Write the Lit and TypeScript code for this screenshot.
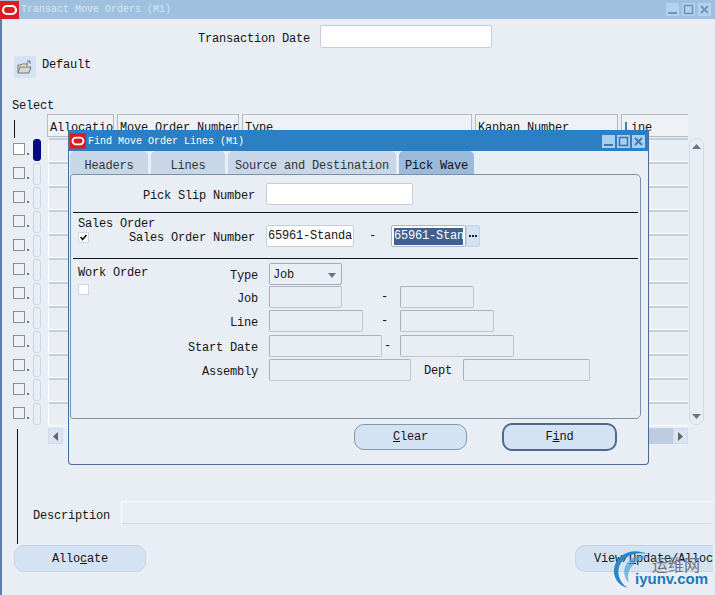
import { LitElement, html, css, svg } from "lit";
import { customElement } from "lit/decorators.js";

const logo = (w: number, h: number) => html`<svg class="logo" width=${w} height=${h} viewBox="0 0 19 18"><rect width="19" height="18" fill="#dc1c24"/><rect x="3" y="5" width="13" height="8" rx="4" fill="none" stroke="#fff" stroke-width="2.2"/></svg>`;

const winBtns = (cls: string) => html`<div class="winbtns ${cls}">
  <svg width="13" height="13" viewBox="0 0 13 13"><rect width="13" height="13" class="wb"/><rect x="2" y="9" width="9" height="2" class="wg"/></svg>
  <svg width="13" height="13" viewBox="0 0 13 13"><rect width="13" height="13" class="wb"/><rect x="2.5" y="2.5" width="8" height="8" fill="none" stroke-width="1.6" class="ws"/></svg>
  <svg width="13" height="13" viewBox="0 0 13 13"><rect width="13" height="13" class="wb"/>${svg`<path d="M3 3l7 7M10 3l-7 7" stroke-width="2" fill="none" class="ws"/>`}</svg>
</div>`;

const headers = [
  { t: "Allocatio", w: 67 },
  { t: "Move Order Number", w: 122 },
  { t: "Type", w: 230 },
  { t: "Kanban Number", w: 143 },
  { t: "Line", w: 67 },
];
const rows = Array.from({ length: 12 }, (_, i) => i);
const workRows = [
  { label: "Job", w1: 73, dash: 39, w2: 74 },
  { label: "Line", w1: 94, dash: 18, w2: 94 },
  { label: "Start Date", w1: 113, dash: 2, w2: 114 },
];

@customElement("app-root")
export class AppRoot extends LitElement {
  static styles = css`
    :host { display: block; position: relative; width: 715px; height: 595px; overflow: hidden;
      font-family: "Liberation Mono", monospace; font-size: 12px; letter-spacing: -0.2px; color: #151515; background: #e9eef4; }
    * { box-sizing: border-box; }
    u { text-decoration: underline; }
    .logo { display: block; flex: none; }
    .main { height: 595px; border-left: 2px solid #5f7ea8; display: flex; flex-direction: column; }
    .title { height: 19px; background: #9fc0de; display: flex; align-items: center; color: #d9e6f1; font-size: 10px; letter-spacing: 0; margin-left: -2px; }
    .title span { margin-left: 2px; }
    .winbtns { margin-left: auto; display: flex; gap: 3px; }
    .winbtns.m { margin-right: 4px; }
    .m .wb { fill: #b4d2ec; } .m .wg { fill: #6b96c2; } .m .ws { stroke: #6b96c2; }
    .d .wb { fill: #a9cfee; } .d .wg { fill: #3f78b3; } .d .ws { stroke: #3f78b3; }
    .winbtns.d { margin-right: 3px; gap: 2px; }
    .date { display: flex; align-items: center; margin: 6px 0 0 196px; height: 23px; }
    .date .lbl { width: 122px; padding-top: 4px; }
    .input { height: 22px; background: #fff; border: 1px solid #c3cfdd; border-radius: 2px; flex: none; }
    .date .input { width: 172px; height: 23px; }
    .dflt { display: flex; margin: 8px 0 0 12px; height: 22px; gap: 6px; }
    .iconbtn { width: 22px; height: 22px; background: #d3e3f3; border-radius: 2px; display: flex; align-items: center; justify-content: center; }
    .dflt .lbl { margin-top: 2px; }
    .sel { margin: 21px 0 0 10px; height: 15px; line-height: 15px; }
    .hdr { display: flex; height: 24px; margin-left: 45px; gap: 3px; position: relative; }
    .hdr .tick { position: absolute; left: -33px; top: 6px; width: 1px; height: 18px; background: #111; }
    .hc { flex: none; border: 1px solid #b5bcc5; height: 23px; padding: 6px 0 0 2px; background: #eef2f6; overflow: hidden; white-space: nowrap; }
    .hc:last-of-type { border-right: none; }
    .body { display: flex; }
    .rows { width: 687px; }
    .row { display: flex; height: 24px; align-items: flex-start; padding-left: 11px; }
    .cb { width: 12px; height: 12px; border: 1px solid #8b8f96; background: #eef2f7; margin-top: 5px; flex: none; }
    .row:first-child .cb { background: #fff; }
    .dot { width: 2px; height: 2px; background: #777; margin: 15px 4px 0 2px; flex: none; }
    .ind { width: 8px; height: 22px; margin-top: 1px; border: 1px solid #c9d6e6; border-radius: 3px; background: #e9eef5; flex: none; }
    .ind.cur { background: #00087f; border-color: #00087f; }
    .cells { margin-left: 7px; width: 640px; height: 24px; border-top: 2px solid #c3cfe0; border-left: 1px solid #fff; border-radius: 3px 0 0 0; border-bottom: 1px solid #fff; background: #e9eef4; }
    .vs { width: 15px; height: 287px; flex: none; border: 1px solid #d0dbe8; border-radius: 7px; display: flex; flex-direction: column; justify-content: space-between; align-items: center; padding: 5px 0; }
    .hs { display: flex; align-items: stretch; margin: 2px 0 0 46px; height: 16px; width: 640px; position: relative; }
    .hs .line { position: absolute; left: -31px; top: 1px; width: 1px; height: 115px; background: #111; }
    .sb { width: 15px; background: #dbe5f1; display: flex; align-items: center; justify-content: center; border: 1px solid #cfdae8; flex: none; }
    .track { flex: 1; }
    .thumb { width: 26px; background: #bccde2; }
    .desc { display: flex; align-items: center; margin: 57px 2px 0 31px; height: 23px; }
    .desc .lbl { width: 88px; padding-top: 6px; }
    .desc .input { flex: 1; background: #eaeff5; border: none; border-top: 1px solid #fff; border-bottom: 1px solid #d2dbe6; border-left: 1px solid #fff; height: 23px; }
    .bottom { display: flex; justify-content: space-between; margin: 21px 2px 0 12px; }
    .btn { height: 27px; background: #d3e3f3; border: 1px solid #c3d3e5; border-radius: 10px; display: flex; align-items: center; justify-content: center; flex: none; }
    .bottom .b1 { width: 132px; }
    .bottom .b1 span, .bottom .b2 span { padding-top: 1px; }
    .bottom .b2 { width: 138px; justify-content: flex-end; border-radius: 10px 0 0 10px; border-right: none; white-space: nowrap; overflow: hidden; }

    .dlg { position: absolute; left: 68px; top: 130px; width: 581px; height: 335px; background: #e9eef4; border: 1px solid #4a6a98; border-radius: 0 0 4px 4px; border-top: none; }
    .dtitle { height: 21px; padding: 1px 0 0 1px; background: #2c7fc2; display: flex; align-items: center; color: #fff; font-size: 10px; letter-spacing: 0; }
    .dtitle span { margin-left: 2px; }
    .tabs { display: flex; gap: 3px; height: 23px; margin-left: 1px; }
    .tab { background: #c8d7e8; color: #333; border-radius: 5px 5px 0 0; display: flex; align-items: center; justify-content: center; flex: none; padding-top: 6px; }
    .tab.on { background: #9bb9d9; color: #111; }
    .panel { width: 571px; height: 245px; margin-left: 1px; border: 1px solid #7a90a8; border-radius: 3px 5px 5px 3px; padding-top: 8px; }
    .prow { display: flex; align-items: center; height: 22px; }
    .prow .lbl { width: 184px; text-align: right; margin-right: 11px; flex: none; padding-top: 3px; }
    hr { margin: 7px 2px 0 2px; height: 1px; border: none; background: #151515; }
    .sales { display: flex; height: 38px; }
    .sleft { width: 184px; margin-right: 11px; padding: 4px 0 0 7px; flex: none; }
    .sline { display: flex; justify-content: space-between; align-items: center; margin-top: -1px; }
    .sline span { padding-top: 1px; }
    .check { width: 11px; height: 11px; background: #fff; border: 1px solid #cdd6e2; flex: none; display: block; }
    .sright { display: flex; align-items: center; margin-top: 12px; height: 22px; }
    .in1 { width: 88px; overflow: hidden; white-space: nowrap; padding: 3px 0 0 1px; }
    .sdash { width: 37px; text-align: center; }
    .in2 { width: 75px; overflow: hidden; white-space: nowrap; border-color: #aab4c2; padding: 2px; }
    .in2 b { display: block; background: #3e6190; color: #fff; font-weight: normal; height: 17px; line-height: 16px; overflow: hidden; }
    .lov { width: 14px; height: 22px; background: #d3e3f3; border: 1px solid #c3d3e5; border-radius: 0 3px 3px 0; display: flex; align-items: center; justify-content: center; gap: 1px; }
    .lov i { width: 2px; height: 2px; background: #222; }
    .work { display: flex; padding-top: 4px; }
    .wleft { width: 70px; padding: 3px 0 0 7px; flex: none; white-space: nowrap; }
    .wleft .check { margin-top: 4px; }
    .wgrid { display: grid; grid-template-rows: 23px 24px 25px 24px 22px; }
    .wrow { display: flex; align-items: flex-start; }
    .wrow .lbl { width: 117px; margin-right: 11px; text-align: right; padding-top: 6px; flex: none; }
    .off { background: #e9eef4; border: 1px solid #bcc6d2; border-top-color: #a9b2bd; border-left-color: #a9b2bd; }
    .select { width: 73px; background: #eaeff5; padding: 2px 5px 0 3px; display: flex; align-items: center; justify-content: space-between; border-color: #a3aebb; }
    .dash { width: 7px; text-align: center; flex: none; padding-top: 4px; }
    .dept { margin: 5px 11px 0 13px; flex: none; }
    .dbtns { display: flex; margin: 4px 0 0 285px; gap: 35px; align-items: center; }
    .clear { width: 113px; height: 26px; border-color: #7f97b1; }
    .find { width: 115px; height: 28px; border: 2px solid #4e6a8c; }

    .wm { position: absolute; left: 610px; top: 545px; width: 105px; height: 50px; pointer-events: none; letter-spacing: 0; }
    .wm svg { position: absolute; left: 1px; top: 3px; }
    .wm .cn { position: absolute; left: 42px; top: 7px; font: 16px "Noto Sans CJK SC", sans-serif; color: #6f7379; }
    .wm .en { position: absolute; left: 25px; top: 25px; font: bold 15px "Liberation Sans", sans-serif; color: #2178b4; white-space: nowrap; }
  `;

  render() {
    return html`
      <div class="main">
        <div class="title">${logo(19, 18)}<span>Transact Move Orders (M1)</span>${winBtns("m")}</div>
        <div class="date"><span class="lbl">Transaction Date</span><div class="input"></div></div>
        <div class="dflt">
          <div class="iconbtn"><svg width="18" height="16" viewBox="0 0 18 16"><path d="M2 14V6h3l1-1h5v2" fill="#e8e4d6" stroke="#777" /><path d="M2 14l2-6h11l-2 6z" fill="#d8d8d0" stroke="#777"/><path d="M10 5l4-3M14 2h-3M14 2v3" stroke="#6a7f99" fill="none"/></svg></div>
          <span class="lbl">Default</span>
        </div>
        <div class="sel">Select</div>
        <div class="hdr"><i class="tick"></i>${headers.map((h) => html`<div class="hc" style="width:${h.w}px">${h.t}</div>`)}</div>
        <div class="body">
          <div class="rows">
            ${rows.map((i) => html`<div class="row"><div class="cb"></div><i class="dot"></i><div class="ind ${i === 0 ? "cur" : ""}"></div><div class="cells"></div></div>`)}
          </div>
          <div class="vs">
            <svg width="9" height="5" viewBox="0 0 9 5"><path d="M4.5 0L9 5H0z" fill="#6e7580"/></svg>
            <svg width="9" height="5" viewBox="0 0 9 5"><path d="M4.5 5L9 0H0z" fill="#6e7580"/></svg>
          </div>
        </div>
        <div class="hs">
          <i class="line"></i>
          <div class="sb"><svg width="5" height="9" viewBox="0 0 5 9"><path d="M0 4.5L5 0v9z" fill="#666"/></svg></div>
          <div class="track"></div><div class="thumb"></div>
          <div class="sb"><svg width="5" height="9" viewBox="0 0 5 9"><path d="M5 4.5L0 0v9z" fill="#666"/></svg></div>
        </div>
        <div class="desc"><span class="lbl">Description</span><div class="input"></div></div>
        <div class="bottom">
          <div class="btn b1"><span>Allo<u>c</u>ate</span></div>
          <div class="btn b2"><span>View/<u>U</u>pdate/Alloc</span></div>
        </div>
      </div>

      <div class="dlg">
        <div class="dtitle">${logo(16, 16)}<span>Find Move Order Lines (M1)</span>${winBtns("d")}</div>
        <div class="tabs">
          <div class="tab" style="width:78px">Headers</div>
          <div class="tab" style="width:74px">Lines</div>
          <div class="tab" style="width:168px">Source and Destination</div>
          <div class="tab on" style="width:75px">Pick Wave</div>
        </div>
        <div class="panel">
          <div class="prow"><span class="lbl">Pick Slip Number</span><div class="input" style="width:147px"></div></div>
          <hr />
          <div class="sales">
            <div class="sleft">
              <div>Sales Order</div>
              <div class="sline">
                <svg class="check" viewBox="0 0 11 11"><path d="M2 5l2.5 3L9 2.5" fill="none" stroke="#111" stroke-width="2"/></svg>
                <span>Sales Order Number</span>
              </div>
            </div>
            <div class="sright">
              <div class="input in1">65961-Standard</div>
              <span class="sdash">-</span>
              <div class="input in2"><b>65961-Standard</b></div>
              <div class="lov"><i></i><i></i><i></i></div>
            </div>
          </div>
          <hr />
          <div class="work">
            <div class="wleft"><div>Work Order</div><div class="check"></div></div>
            <div class="wgrid">
              <div class="wrow"><span class="lbl">Type</span><div class="input select">Job<svg width="8" height="5" viewBox="0 0 8 5"><path d="M0 0h8L4 5z" fill="#6e7580"/></svg></div></div>
              ${workRows.map((r) => html`<div class="wrow"><span class="lbl">${r.label}</span><div class="input off" style="width:${r.w1}px"></div><span class="dash" style="margin:0 ${131 - r.w1 - r.dash - 7}px 0 ${r.dash}px">-</span><div class="input off" style="width:${r.w2}px"></div></div>`)}
              <div class="wrow"><span class="lbl">Assembly</span><div class="input off" style="width:142px"></div><span class="dept">Dept</span><div class="input off" style="width:127px"></div></div>
            </div>
          </div>
        </div>
        <div class="dbtns">
          <div class="btn clear"><span><u>C</u>lear</span></div>
          <div class="btn find"><span>F<u>i</u>nd</span></div>
        </div>
      </div>

      <div class="wm">
        <svg width="42" height="44" viewBox="0 0 42 44"><path d="M36 6C22 -1 5 6 3 21c-1 9 5 17 14 19C9 35 6 27 8 19 11 9 24 3 36 6z" fill="#2a86c4"/><path d="M38 9C28 5 17 10 14 19c-2 6 0 12 4 16-2-6-1-12 3-17 4-5 10-8 17-9z" fill="#4aa3d8" opacity=".7"/></svg>
        <span class="cn">运维网</span>
        <span class="en">iyunv.com</span>
      </div>
    `;
  }
}
